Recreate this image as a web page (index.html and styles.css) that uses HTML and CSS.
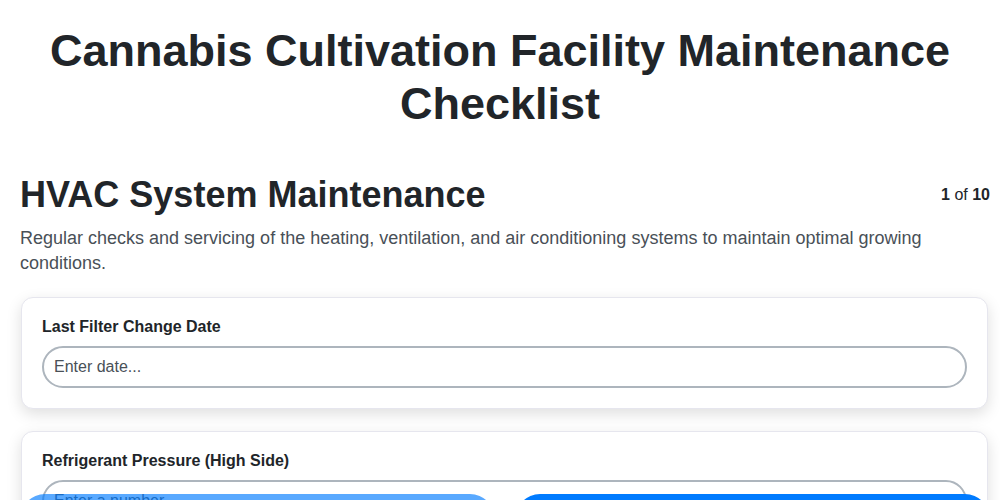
FILE: index.html
```html
<!DOCTYPE html>
<html lang="en">
<head>
<meta charset="utf-8">
<title>Cannabis Cultivation Facility Maintenance Checklist</title>
<link rel="stylesheet" href="styles.css">
</head>
<body>
<div class="page">
  <h1 class="title">Cannabis Cultivation Facility Maintenance Checklist</h1>
  <div class="section-head">
    <h2 class="section-title">HVAC System Maintenance</h2>
    <div class="counter"><b>1</b> of <b>10</b></div>
  </div>
  <p class="section-desc">Regular checks and servicing of the heating, ventilation, and air conditioning systems to maintain optimal growing conditions.</p>
  <div class="card">
    <label class="field-label" for="f1">Last Filter Change Date</label>
    <input class="field-input" id="f1" type="text" placeholder="Enter date...">
  </div>
  <div class="card">
    <label class="field-label" for="f2">Refrigerant Pressure (High Side)</label>
    <input class="field-input" id="f2" type="text" placeholder="Enter a number...">
  </div>
  <div class="card">
    <label class="field-label" for="f3">Refrigerant Pressure (Low Side)</label>
    <input class="field-input" id="f3" type="text" placeholder="Enter a number...">
  </div>
</div>
<div class="nav">
  <button class="btn btn-prev" disabled>Previous</button>
  <button class="btn btn-next">Next</button>
</div>
</body>
</html>
```
FILE: styles.css
```css
* { box-sizing: border-box; }
html, body { margin: 0; padding: 0; background: #fff; }
body {
  font-family: "Liberation Sans", Arial, sans-serif;
  color: #212529;
}
.page {
  padding: 0 10px 80px 20px;
}
.title {
  margin: 24px 0 0 -10px;
  font-size: 45px;
  line-height: 53px;
  font-weight: 700;
  text-align: center;
  color: #212529;
}
.section-head {
  display: flex;
  justify-content: space-between;
  align-items: center;
  margin-top: 43px;
}
.section-title {
  margin: 0;
  font-size: 36px;
  line-height: 43px;
  font-weight: 700;
}
.counter {
  font-size: 16px;
  color: #212529;
}
.section-desc {
  margin: 10px 0 21px;
  font-size: 18px;
  line-height: 25px;
  color: #495057;
}
.card {
  margin: 0 2px 22px 1px;
  padding: 20px;
  background: #fff;
  border: 1px solid #e6e6ee;
  border-radius: 12px;
  box-shadow: 0 5px 15px rgba(0, 0, 0, 0.13);
}
.field-label {
  display: block;
  font-size: 16px;
  line-height: 18px;
  font-weight: 700;
  margin-bottom: 10px;
  color: #212529;
}
.field-input {
  display: block;
  width: 100%;
  height: 42px;
  padding: 0 10px;
  font-family: "Liberation Sans", Arial, sans-serif;
  font-size: 16px;
  color: #212529;
  background: #fff;
  border: 2px solid #adb5bd;
  border-radius: 21px;
  outline: none;
}
.field-input::placeholder { color: #495057; }
.nav {
  position: fixed;
  left: 20px;
  right: 10px;
  bottom: -44px;
  display: flex;
  gap: 20px;
}
.btn {
  flex: 1;
  height: 50px;
  border: none;
  border-radius: 25px;
  background: #007bff;
  color: #fff;
  font-family: "Liberation Sans", Arial, sans-serif;
  font-size: 16px;
  font-weight: 700;
}
.btn-prev { opacity: 0.65; }
```
